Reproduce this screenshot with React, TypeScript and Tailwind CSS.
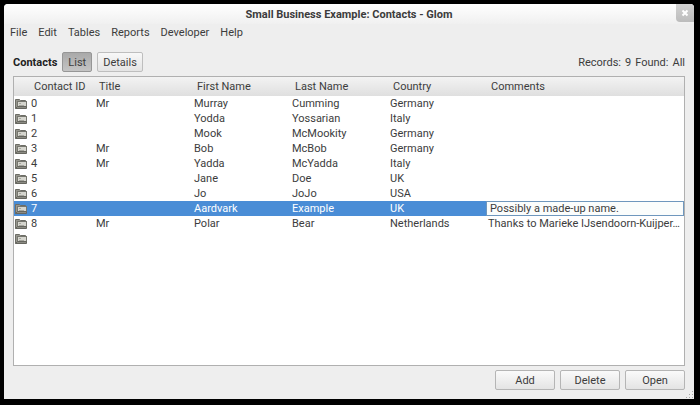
import { useState } from "react";
import clsx from "clsx";

type Contact = {
  id: string;
  title: string;
  firstName: string;
  lastName: string;
  country: string;
  comments: string;
};

const MENUS = ["File", "Edit", "Tables", "Reports", "Developer", "Help"];

const CONTACTS: Contact[] = [
  { id: "0", title: "Mr", firstName: "Murray", lastName: "Cumming", country: "Germany", comments: "" },
  { id: "1", title: "", firstName: "Yodda", lastName: "Yossarian", country: "Italy", comments: "" },
  { id: "2", title: "", firstName: "Mook", lastName: "McMookity", country: "Germany", comments: "" },
  { id: "3", title: "Mr", firstName: "Bob", lastName: "McBob", country: "Germany", comments: "" },
  { id: "4", title: "Mr", firstName: "Yadda", lastName: "McYadda", country: "Italy", comments: "" },
  { id: "5", title: "", firstName: "Jane", lastName: "Doe", country: "UK", comments: "" },
  { id: "6", title: "", firstName: "Jo", lastName: "JoJo", country: "USA", comments: "" },
  { id: "7", title: "", firstName: "Aardvark", lastName: "Example", country: "UK", comments: "Possibly a made-up name." },
  { id: "8", title: "Mr", firstName: "Polar", lastName: "Bear", country: "Netherlands", comments: "Thanks to Marieke IJsendoorn-Kuijper…" },
];

function OpenIcon() {
  return (
    <svg className="h-3 w-3 shrink-0" viewBox="0 0 12 12" aria-hidden="true">
      <path d="M0.5 10.5V1.5H4.5L5.5 2.5H10.5V4" fill="#96968e" stroke="#6d6d66" />
      <rect x="2.5" y="3.5" width="9" height="5" fill="#d6d6cf" stroke="#77776f" />
      <path d="M4 5.5H6M4 7.5H9" stroke="#a6a69e" />
      <path d="M0.5 10.5L2.5 8.5H11.5V10.5Z" fill="#8b8b83" stroke="#66665f" />
    </svg>
  );
}

function ActionButton({ label }: { label: string }) {
  return (
    <button className="h-5 w-15 rounded-xs border border-[#b5b5b5] bg-linear-to-b from-[#fafafa] to-[#e4e4e4] leading-none">
      {label}
    </button>
  );
}

export default function App() {
  const [view, setView] = useState("List");
  const [selected, setSelected] = useState("7");
  const [comment, setComment] = useState("Possibly a made-up name.");

  return (
    <div className="flex min-h-screen bg-black pt-1 pr-1.5 pb-1.5 pl-1 font-[Roboto,'Noto_Sans',sans-serif] text-[11px] leading-[15px] text-[#3c3c3c]">
      <div className="flex min-w-0 flex-1 flex-col rounded-t-sm bg-[#eeeeee]">
        <header className="flex h-5 items-start rounded-t-sm bg-linear-to-b from-white to-[#f0f0f0]">
          <div className="w-[18px]" />
          <h1 className="flex-1 pt-[3px] text-center text-[11px] font-bold">
            Small Business Example: Contacts - Glom
          </h1>
          <button
            aria-label="Close"
            className="flex h-[18px] w-[18px] items-center justify-center rounded-tr-sm rounded-bl-sm bg-linear-to-b from-[#d2d2d2] to-[#bcbcbc]"
          >
            <svg className="h-2 w-2" viewBox="0 0 8 8">
              <path d="M1.5 1.5L6.5 6.5M6.5 1.5L1.5 6.5" stroke="white" strokeWidth="2" />
            </svg>
          </button>
        </header>

        <nav className="flex gap-[11px] px-1.5 pt-px">
          {MENUS.map((m) => (
            <button key={m}>{m}</button>
          ))}
        </nav>

        <div className="mt-3 flex items-center justify-between px-[9px]">
          <div className="flex items-center gap-[5px]">
            <span className="font-bold text-[#222222]">Contacts</span>
            {["List", "Details"].map((v) => (
              <button
                key={v}
                onClick={() => setView(v)}
                className={clsx(
                  "h-5 rounded-xs border px-[5px] leading-none",
                  view === v
                    ? "border-[#969696] bg-linear-to-b from-[#a9a9a9] to-[#c4c4c4]"
                    : "border-[#bebebe] bg-linear-to-b from-[#f8f8f8] to-[#e4e4e4]"
                )}
              >
                {v}
              </button>
            ))}
          </div>
          <div className="flex gap-1">
            <span>Records:</span>
            <span>9</span>
            <span>Found:</span>
            <span>All</span>
          </div>
        </div>

        <div className="mx-[9px] mt-1 flex-1 border border-[#b0b0b0] bg-white">
          <table className="w-full table-fixed border-collapse text-left leading-[14px]">
            <colgroup>
              <col className="w-20" />
              <col className="w-[98px]" />
              <col className="w-[98px]" />
              <col className="w-[98px]" />
              <col className="w-[98px]" />
              <col />
            </colgroup>
            <thead>
              <tr className="h-[19px] bg-linear-to-b from-[#f3f3f3] to-[#dfdfdf]">
                <th className="p-0 pt-px pl-5 font-normal">Contact ID</th>
                <th className="p-0 pt-px pl-[5px] font-normal">Title</th>
                <th className="p-0 pt-px pl-[5px] font-normal">First Name</th>
                <th className="p-0 pt-px pl-[5px] font-normal">Last Name</th>
                <th className="p-0 pt-px pl-[5px] font-normal">Country</th>
                <th className="p-0 pt-px pl-[5px] font-normal">Comments</th>
              </tr>
            </thead>
            <tbody>
              {CONTACTS.map((c) => (
                <tr
                  key={c.id}
                  onClick={() => setSelected(c.id)}
                  className={clsx("h-[15px]", selected === c.id && "bg-[#4a8dd6] text-white")}
                >
                  <td className="p-0 pt-px pl-px">
                    <div className="flex items-center gap-1">
                      <OpenIcon />
                      {c.id}
                    </div>
                  </td>
                  <td className="p-0 pt-px pl-0.5">{c.title}</td>
                  <td className="p-0 pt-px pl-0.5">{c.firstName}</td>
                  <td className="p-0 pt-px pl-0.5">{c.lastName}</td>
                  <td className="p-0 pt-px pl-0.5">{c.country}</td>
                  <td className={clsx("truncate p-0", selected !== c.id && "pt-px pl-0.5")}>
                    {c.id === "7" && selected === "7" ? (
                      <input
                        type="text"
                        aria-label="Comments"
                        value={comment}
                        onChange={(e) => setComment(e.target.value)}
                        className="block h-[15px] w-full border border-[#6f97bd] bg-[#fbfdfc] px-[3px] text-[#3c3c3c] outline-none"
                      />
                    ) : (
                      c.comments
                    )}
                  </td>
                </tr>
              ))}
              <tr className="h-[15px]">
                <td className="p-0 pt-px pl-px" colSpan={6}>
                  <OpenIcon />
                </td>
              </tr>
            </tbody>
          </table>
        </div>

        <footer className="mt-1 flex justify-end gap-[5px] pr-[9px]">
          <ActionButton label="Add" />
          <ActionButton label="Delete" />
          <ActionButton label="Open" />
        </footer>
        <div className="flex h-[9px] items-end justify-end">
          <svg className="h-2 w-2" viewBox="0 0 8 8" aria-hidden="true">
            <path d="M6 0h1v1h-1zM3 3h1v1h-1zM6 3h1v1h-1zM0 6h1v1h-1zM3 6h1v1h-1zM6 6h1v1h-1z" fill="#a8a8a8" />
          </svg>
        </div>
      </div>
    </div>
  );
}
